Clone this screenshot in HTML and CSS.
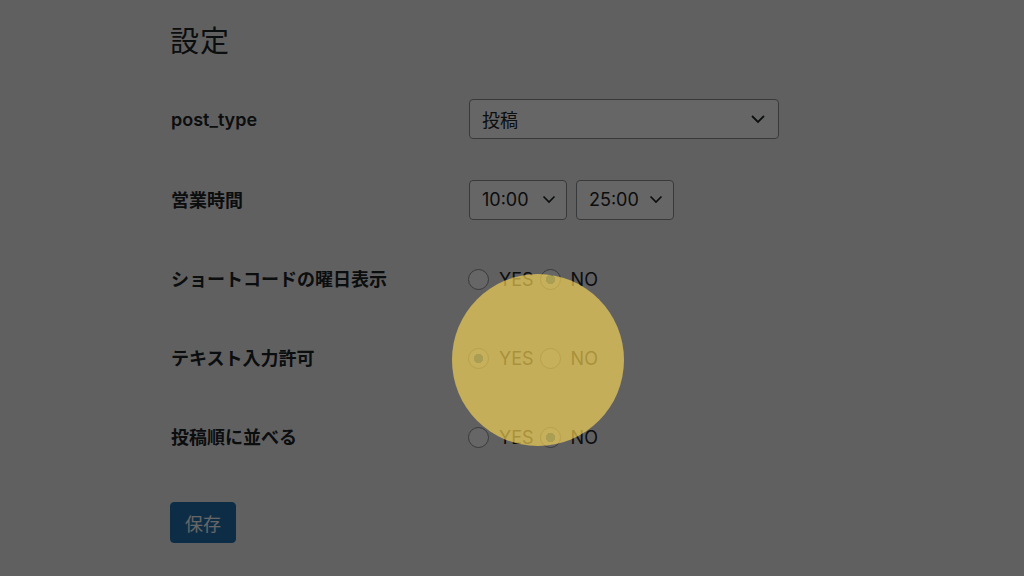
FILE: index.html
```html
<!DOCTYPE html>
<html lang="ja">
<head>
  <meta charset="UTF-8" />
  <title>設定</title>
  <meta name="viewport" content="width=device-width, initial-scale=1.0" />
  <link rel="stylesheet" href="styles.css">
</head>
<body>
  <div class="wrap">
    <h1>設定</h1>

    <div class="form-table">
      <div class="row">
        <div class="label">post_type</div>
        <div class="field">
          <div class="select wide">
            <span>投稿</span>
            <svg width="16" height="10" viewBox="0 0 16 10"><path d="M2 2l6 6 6-6" fill="none" stroke="#1d2327" stroke-width="1.8"/></svg>
          </div>
        </div>
      </div>

      <div class="row">
        <div class="label">営業時間</div>
        <div class="field">
          <div class="select time">
            <span>10:00</span>
            <svg width="14" height="9" viewBox="0 0 14 9"><path d="M1.5 1.5l5.5 5.5 5.5-5.5" fill="none" stroke="#1d2327" stroke-width="1.7"/></svg>
          </div>
          <div class="select time">
            <span>25:00</span>
            <svg width="14" height="9" viewBox="0 0 14 9"><path d="M1.5 1.5l5.5 5.5 5.5-5.5" fill="none" stroke="#1d2327" stroke-width="1.7"/></svg>
          </div>
        </div>
      </div>

      <div class="row">
        <div class="label">ショートコードの曜日表示</div>
        <div class="field radios">
          <label><input type="radio" name="weekday"> YES</label>
          <label><input type="radio" name="weekday" checked> NO</label>
        </div>
      </div>

      <div class="row">
        <div class="label">テキスト入力許可</div>
        <div class="field radios">
          <label><input type="radio" name="text" checked> YES</label>
          <label><input type="radio" name="text"> NO</label>
        </div>
      </div>

      <div class="row">
        <div class="label">投稿順に並べる</div>
        <div class="field radios">
          <label><input type="radio" name="order"> YES</label>
          <label><input type="radio" name="order" checked> NO</label>
        </div>
      </div>
    </div>

    <button class="button-primary">保存</button>
  </div>

  <div class="dim"></div>
  <div class="click-spot"></div>
</body>
</html>
```

FILE: styles.css
```css
body {
  margin: 0;
  background: #f0f0f1;
  color: #1d2327;
  font-family: Inter, "Noto Sans CJK JP", sans-serif;
  font-size: 18px;
}
.wrap {
  padding: 0 0 0 170px;
}
h1 {
  margin: 0;
  height: 80px;
  padding-top: 22px;
  box-sizing: border-box;
  font-size: 29px;
  font-weight: 400;
  line-height: 40px;
  letter-spacing: 1px;
}
.row {
  display: grid;
  grid-template-columns: 299px auto;
  align-items: center;
  height: 79px;
}
.label {
  font-weight: 600;
  padding-left: 1px;
}
.field {
  display: flex;
  gap: 9px;
}
.select {
  display: flex;
  align-items: center;
  justify-content: space-between;
  box-sizing: border-box;
  height: 40px;
  padding: 0 12px;
  background: #fff;
  border: 1px solid #8c8f94;
  border-radius: 4px;
}
.select.wide {
  width: 310px;
  margin-top: -2px;
}
.select.time {
  width: 98px;
  padding-right: 10px;
  margin-top: 2px;
}
.radios {
  gap: 6px;
  margin-left: -1px;
  padding-top: 3px;
}
.radios label {
  display: flex;
  align-items: center;
  gap: 10px;
}
.radios input {
  appearance: none;
  margin: 0;
  width: 21px;
  height: 21px;
  border: 1px solid #8c8f94;
  border-radius: 50%;
  background: #fff;
}
.radios input:checked {
  background: radial-gradient(circle, #3582c4 0 4.5px, #fff 5px);
}
.button-primary {
  margin-top: 27px;
  height: 41px;
  padding: 0 14px;
  background: #2271b1;
  color: #fff;
  border: 1px solid #2271b1;
  border-radius: 4px;
  font-family: inherit;
  font-size: 18px;
}
.dim {
  position: fixed;
  inset: 0;
  background: rgba(0, 0, 0, 0.6);
}
.click-spot {
  position: fixed;
  left: 452px;
  top: 274px;
  width: 172px;
  height: 172px;
  border-radius: 50%;
  background: rgba(250, 215, 85, 0.65);
}
```
